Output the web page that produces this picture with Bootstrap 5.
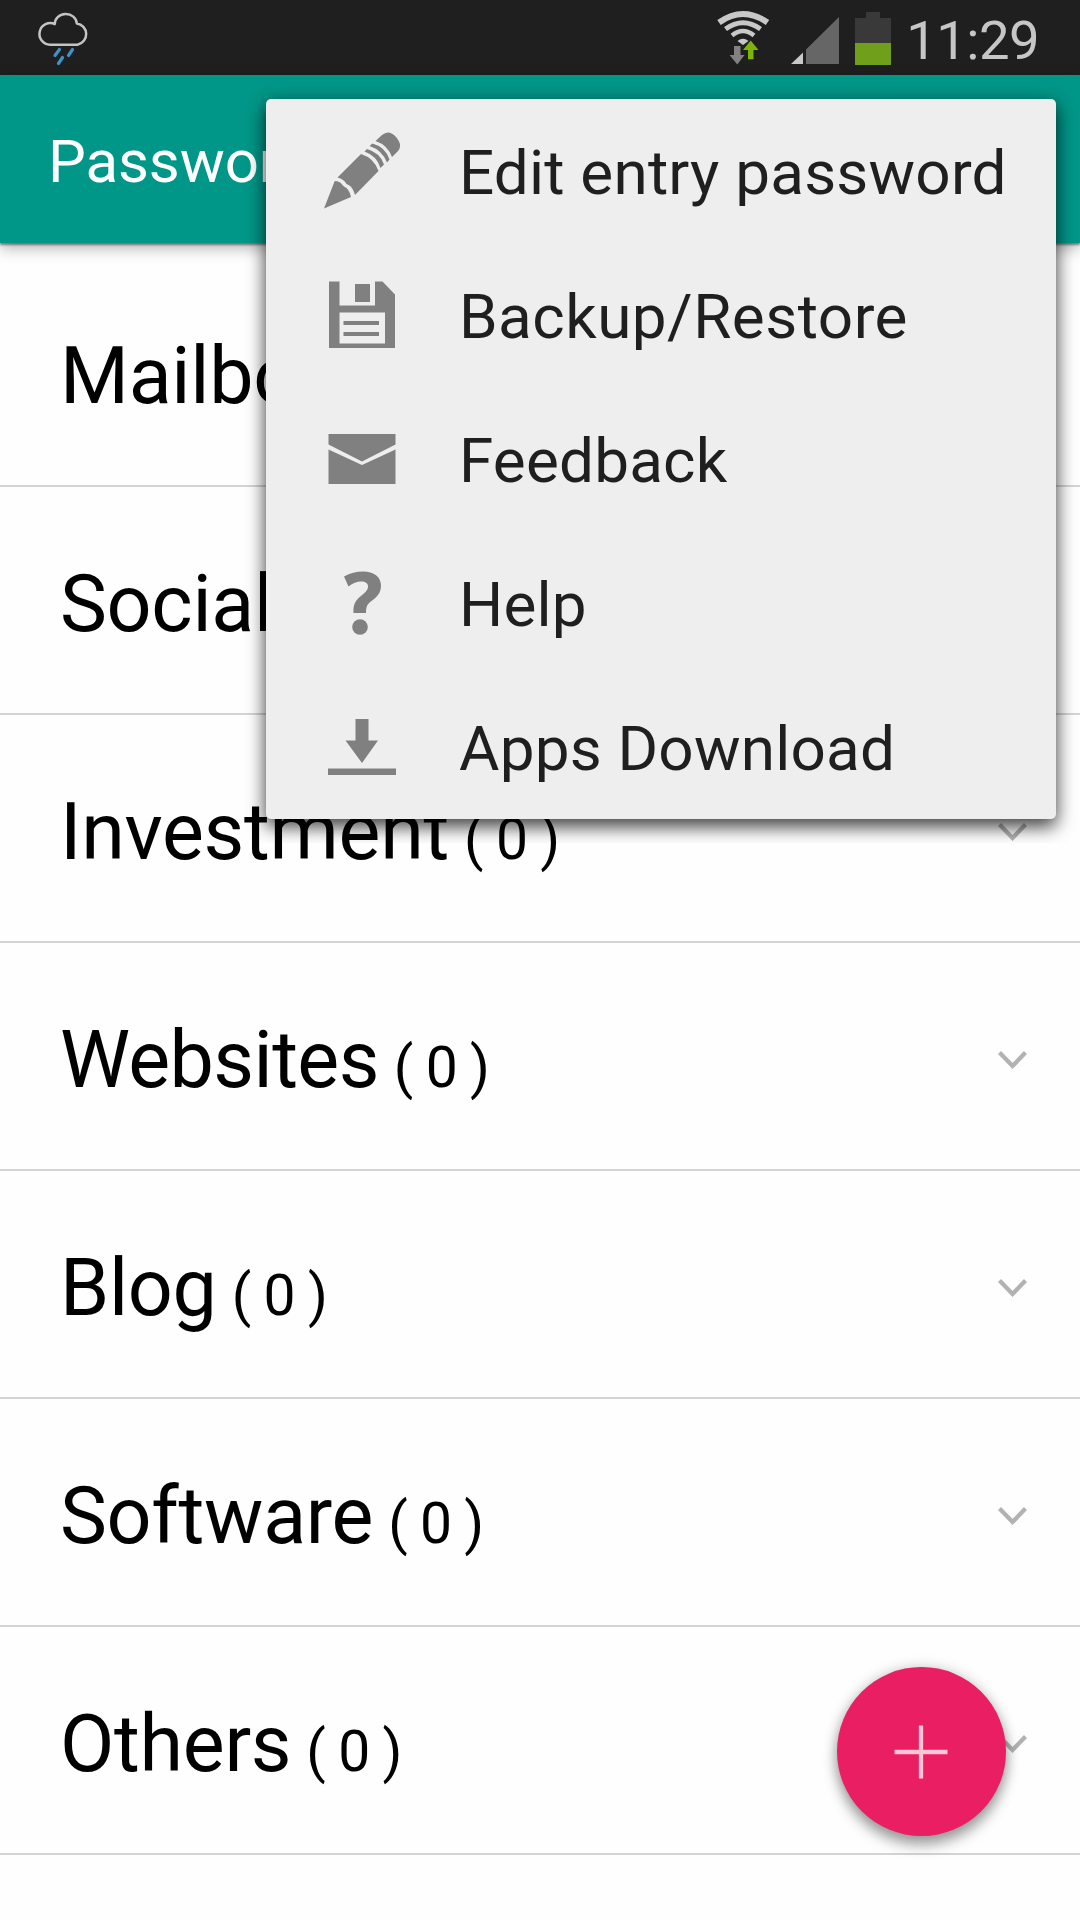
<!DOCTYPE html>
<html lang="en">
<head>
<meta charset="utf-8">
<meta name="viewport" content="width=device-width, initial-scale=1">
<title>Passwords</title>
<link href="https://cdn.jsdelivr.net/npm/bootstrap@5.3.0/dist/css/bootstrap.min.css" rel="stylesheet">
<style>
  body { font-family: Roboto, "Noto Sans", sans-serif; background: #fefefe; color: #000; }
  .screen { width: 1080px; height: 1920px; }
  .statusbar { height: 75px; background: #1f1f1f; color: #c6c6c6; }
  .clock { font-size: 54.5px; line-height: 75px; letter-spacing: -.6px; font-weight: 400; margin: 0 41px 0 -4px; padding-top: 6px; }
  .appbar { height: 168px; background: #009788; color: #fff; z-index: 1; padding: 5px 0 0 48px; box-shadow: 0 2px 2px rgba(0,0,0,.42), 0 5px 14px rgba(0,0,0,.3); }
  .appbar-title { font-size: 60px; line-height: 1; letter-spacing: -.1px; }
  .entries { padding-top: 16px; }
  .entries .entry { height: 228px; padding: 8px 53px 0 60px; border: 0; border-bottom: 2px solid #d3d4d4; border-radius: 0; background: transparent; color: #000; }
  .entry-name { font-size: 79px; line-height: 1; letter-spacing: -.3px; }
  .entry-name.tight { letter-spacing: -.6px; }
  .entry-count { font-size: 57px; line-height: 1; margin-left: 15px; word-spacing: -1px; letter-spacing: -.4px; }
  .options { left: 266px; top: 99px; width: 790px; height: 720px; background: #eee; border-radius: 5px; color: #1f1f1f; z-index: 3; box-shadow: 0 8px 18px rgba(0,0,0,.7), 0 0 20px rgba(0,0,0,.14); clip-path: inset(-24px -24px -24px -24px); }
  .option { height: 144px; padding-left: 56px; color: inherit; text-decoration: none; }
  .option svg { width: 80px; height: 144px; fill: #808080; }
  .option-label { font-size: 62px; line-height: 1; letter-spacing: .2px; margin-left: 57px; padding-top: 4px; white-space: nowrap; }
  .option-label.wide { letter-spacing: .48px; }
  .fab { left: 836.5px; top: 1667px; width: 169px; height: 169px; background: #e91e63; z-index: 2; box-shadow: 0 9px 14px rgba(0,0,0,.34), 0 0 14px rgba(0,0,0,.18); }
</style>
<script src="https://cdn.jsdelivr.net/npm/bootstrap@5.3.0/dist/js/bootstrap.bundle.min.js"></script>
</head>
<body>
<div class="screen position-relative overflow-hidden">
  <header class="statusbar d-flex align-items-center justify-content-between">
    <svg width="100" height="75" viewBox="0 0 100 75" fill="none">
      <path d="M50 44.700 A10.800 10.800 0 1 1 54.800 24.100 A10.700 9.500 0 0 1 76.800 23.400 A10.800 10.800 0 0 1 77.500 44.700 Z" stroke="#c4c4c4" stroke-width="2.500" stroke-linejoin="round"/>
      <path d="M59.500 49.500 L55 55.500 M72.500 49.500 L68.500 55.500 M62.500 57.500 L58.500 63.500" stroke="#3f93c8" stroke-width="3.200" stroke-linecap="round"/>
    </svg>
    <div class="d-flex align-items-center">
      <svg width="211" height="75" viewBox="699 0 211 75">
        <g fill="none" stroke="#c8c8c8">
          <path d="M719 22.500 Q743 5.500 767.500 22.500" stroke-width="6"/>
          <path d="M725.500 29 Q743 16.500 760.500 29" stroke-width="5"/>
          <path d="M732 35.500 Q743 26.500 754 35.500" stroke-width="4.500"/>
        </g>
        <path d="M737.500 41 Q743 36.500 748.500 41 L743 45 Z" fill="#c8c8c8"/>
        <path d="M734 46 h6.500 v9 h4 L737.300 64.500 L729.500 55 h4.500 Z" fill="#828282"/>
        <path d="M750.700 40.500 L758.500 50 h-5 v9.300 h-5.500 V50 h-5 Z" fill="#7cb40a"/>
        <path d="M791 64 L803 52.500 V64 Z" fill="#c8c8c8"/>
        <path d="M806 64 V49.500 L839 17 V64 Z" fill="#666"/>
        <path d="M855 43 V18 h11 v-6 h14 v6 h11 v25 Z" fill="#393939"/>
        <rect x="855" y="43" width="36" height="22" fill="#6f9f1b"/>
      </svg>
      <span class="clock">11:29</span>
    </div>
  </header>

  <nav class="appbar position-relative d-flex align-items-center">
    <span class="appbar-title">Passwords</span>
  </nav>

  <main class="entries list-group rounded-0">
    <div class="entry list-group-item d-flex align-items-center justify-content-between"><div><span class="entry-name">Mailbox</span><span class="entry-count">( 0 )</span></div><svg width="29" height="20"><path d="M1.500 2.500 L14.500 16 L27.500 2.500" fill="none" stroke="#b2b2b2" stroke-width="4.300"/></svg></div>
    <div class="entry list-group-item d-flex align-items-center justify-content-between"><div><span class="entry-name">Social</span><span class="entry-count">( 0 )</span></div><svg width="29" height="20"><path d="M1.500 2.500 L14.500 16 L27.500 2.500" fill="none" stroke="#b2b2b2" stroke-width="4.300"/></svg></div>
    <div class="entry list-group-item d-flex align-items-center justify-content-between"><div><span class="entry-name">Investment</span><span class="entry-count">( 0 )</span></div><svg width="29" height="20"><path d="M1.500 2.500 L14.500 16 L27.500 2.500" fill="none" stroke="#b2b2b2" stroke-width="4.300"/></svg></div>
    <div class="entry list-group-item d-flex align-items-center justify-content-between"><div><span class="entry-name tight">Websites</span><span class="entry-count">( 0 )</span></div><svg width="29" height="20"><path d="M1.500 2.500 L14.500 16 L27.500 2.500" fill="none" stroke="#b2b2b2" stroke-width="4.300"/></svg></div>
    <div class="entry list-group-item d-flex align-items-center justify-content-between"><div><span class="entry-name">Blog</span><span class="entry-count">( 0 )</span></div><svg width="29" height="20"><path d="M1.500 2.500 L14.500 16 L27.500 2.500" fill="none" stroke="#b2b2b2" stroke-width="4.300"/></svg></div>
    <div class="entry list-group-item d-flex align-items-center justify-content-between"><div><span class="entry-name">Software</span><span class="entry-count">( 0 )</span></div><svg width="29" height="20"><path d="M1.500 2.500 L14.500 16 L27.500 2.500" fill="none" stroke="#b2b2b2" stroke-width="4.300"/></svg></div>
    <div class="entry list-group-item d-flex align-items-center justify-content-between"><div><span class="entry-name">Others</span><span class="entry-count">( 0 )</span></div><svg width="29" height="20"><path d="M1.500 2.500 L14.500 16 L27.500 2.500" fill="none" stroke="#b2b2b2" stroke-width="4.300"/></svg></div>
  </main>

  <div class="options position-absolute d-flex flex-column">
    <a class="option d-flex align-items-center">
      <svg viewBox="322 99 80 144">
        <path d="M324 208.500 L334.700 181 Q340 181 342 184.500 L344 186.500 Q349.500 189 351 197 Z"/>
        <path d="M337.500 177.500 L361 154 Q374 158 378.500 171 L355 195 Q353 188 349.500 185.500 L346.500 184 Q344 179 337.500 177.500 Z"/>
        <path d="M364.500 151.500 L367 149 Q380.500 153 384 164.500 L380.500 168 Q377 156 364.500 151.500 Z"/>
        <path d="M369.500 146 L372.500 143.500 Q385.500 147 389.500 159.500 L387 162.500 Q382 150 369.500 146 Z"/>
        <path d="M375.500 141 L382 135 Q389 129 396 137 Q403 145 398 151 L392 157 Q387.500 145 375.500 141 Z"/>
      </svg>
      <span class="option-label">Edit entry password</span>
    </a>
    <a class="option d-flex align-items-center">
      <svg viewBox="322 243 80 144">
        <path fill-rule="evenodd" d="M329 281.500 H339.500 V305.500 H375 V281.500 H382.500 L395 294.500 V348 H329 Z M339.500 312.500 V343.500 H385 V312.500 Z"/>
        <path d="M355 284 H370 V302 H355 Z M343.500 321 H379 V325 H343.500 Z M343.500 332 H379 V336 H343.500 Z"/>
      </svg>
      <span class="option-label wide">Backup/Restore</span>
    </a>
    <a class="option d-flex align-items-center">
      <svg viewBox="322 387 80 144">
        <path d="M328.500 434 H395.500 V444.500 L362 461.500 L328.500 444.500 Z"/>
        <path d="M328.500 449.500 L362 465 L395.500 449.500 V484 H328.500 Z"/>
      </svg>
      <span class="option-label">Feedback</span>
    </a>
    <a class="option d-flex align-items-center">
      <svg viewBox="322 531 80 144">
        <path d="M344 576.500 Q353 571.500 363 571.500 C374 571.500 381 577 381 585.500 C381 593 377 597 371.500 601 C367.500 604 366 606 366 613 H353.500 C353 604 355.500 600.500 361.500 595.500 C366 592 368 589.500 368 586.500 C368 583 365.500 581.500 361 581.500 Q355 581.500 348.500 586.500 Z"/>
        <circle cx="360" cy="627" r="7.800"/>
      </svg>
      <span class="option-label">Help</span>
    </a>
    <a class="option d-flex align-items-center">
      <svg viewBox="322 675 80 144">
        <path d="M355.500 719 H368.500 V740.500 H378 L362 763 L345.500 740.500 H355.500 Z M328 768.500 H396 V775 H328 Z"/>
      </svg>
      <span class="option-label">Apps Download</span>
    </a>
  </div>

  <button type="button" class="fab btn position-absolute rounded-circle border-0 p-0 d-flex align-items-center justify-content-center" aria-label="Add">
    <svg width="54" height="54"><path d="M0.500 27 H53.500 M27 0.500 V53.500" stroke="#fbc5d6" stroke-width="4.300"/></svg>
  </button>
</div>
</body>
</html>
